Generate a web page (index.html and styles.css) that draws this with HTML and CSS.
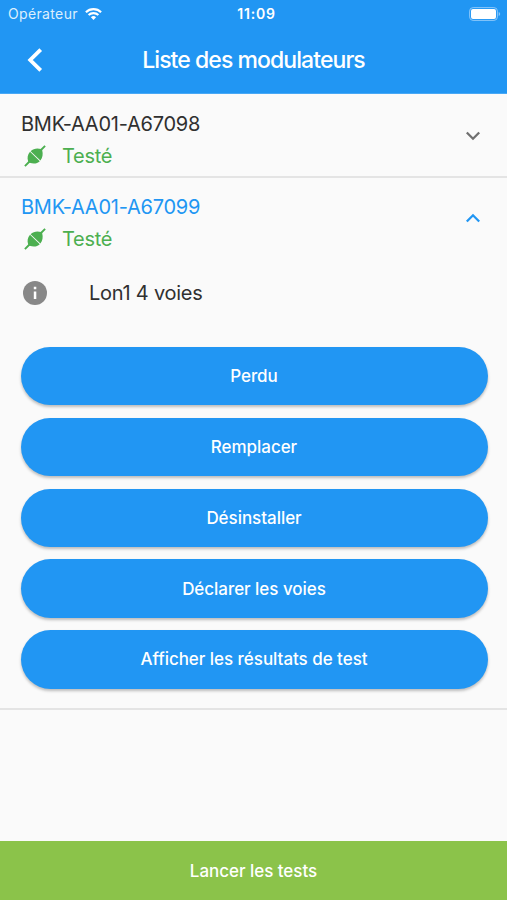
FILE: index.html
```html
<!DOCTYPE html>
<html lang="fr">
<head>
<meta charset="utf-8">
<title>Liste des modulateurs</title>
<link rel="stylesheet" href="styles.css">
</head>
<body>
<svg width="0" height="0" class="defs" aria-hidden="true">
  <symbol id="plug" viewBox="0 0 22 22">
    <path d="M.9 21.100 6 16M16 6 21.100.9" stroke="currentColor" stroke-width="1.900" fill="none"/>
    <path d="M6 6.800 15.800 16.200C13 18.900 9.500 19 5.600 17.800L4.200 16.400C3 13 3.500 9.800 6 6.800ZM6.600 6.200C9.500 3.400 13.500 2.900 17 4.100L18.200 5.300C19.200 9 18.700 12.800 16.400 15.600Z" fill="currentColor"/>
  </symbol>
</svg>
<div class="screen">
  <header class="header">
    <div class="status">
      <div class="carrier"><span>Opérateur</span>
        <svg class="wifi" viewBox="0 0 17 12"><path d="M.9 4.300a10.800 10.800 0 0 1 15.200 0M3.600 7.100a7 7 0 0 1 9.800 0" fill="none" stroke="#fff" stroke-width="2.100"/><path d="M5.900 9.300a3.800 3.800 0 0 1 5.200 0L8.500 12Z" fill="#fff"/></svg>
      </div>
      <span class="time">11:09</span>
      <svg class="battery" viewBox="0 0 32 14"><rect x=".6" y=".6" width="27.800" height="12.800" rx="3.500" fill="none" stroke="#8bc7fa" stroke-width="1"/><rect x="2" y="2" width="25" height="10" rx="2" fill="#fff"/><path d="M29.700 5v4q1.500-.6 1.500-2t-1.500-2Z" fill="#8bc7fa"/></svg>
    </div>
    <div class="bar">
      <svg class="back" viewBox="0 0 16 24"><path d="M13.700 1.600 3.200 12l10.500 10.400" fill="none" stroke="#fff" stroke-width="3.800"/></svg>
      <h1>Liste des modulateurs</h1>
    </div>
  </header>
  <main>
    <section class="item">
      <div class="item-head">
        <div><h2>BMK-AA01-A67098</h2><p class="state"><svg class="plug"><use href="#plug"/></svg><span>Testé</span></p></div>
        <svg class="chevron" viewBox="0 0 16 10"><path d="m1.800 1.500 6.200 6.200 6.200-6.200" fill="none" stroke="currentColor" stroke-width="2.300"/></svg>
      </div>
    </section>
    <section class="item open">
      <div class="item-head">
        <div><h2>BMK-AA01-A67099</h2><p class="state"><svg class="plug"><use href="#plug"/></svg><span>Testé</span></p></div>
        <svg class="chevron" viewBox="0 0 16 10"><path d="m1.800 8.500 6.200-6.200 6.200 6.200" fill="none" stroke="currentColor" stroke-width="2.300"/></svg>
      </div>
      <div class="info">
        <svg class="info-icon" viewBox="0 0 24 24"><circle cx="12" cy="12" r="12" fill="#888"/><path d="M10.800 5.800h2.500v2.500h-2.500zM10.800 10.600h2.500v7.500h-2.500z" fill="#fff"/></svg>
        <span>Lon1 4 voies</span>
      </div>
      <div class="actions">
        <button>Perdu</button>
        <button>Remplacer</button>
        <button>Désinstaller</button>
        <button>Déclarer les voies</button>
        <button>Afficher les résultats de test</button>
      </div>
    </section>
  </main>
  <button class="launch">Lancer les tests</button>
</div>
</body>
</html>
```
FILE: styles.css
```css
* { box-sizing: border-box; }
body { margin: 0; background: #fafafa; font-family: Inter, "Liberation Sans", sans-serif; color: #303030; }
h1, h2, p { margin: 0; font-weight: 400; }
button { border: 0; padding: 0; font: 500 17px/24px Inter, sans-serif; color: #fff; letter-spacing: -.04px; }
.defs { position: absolute; }
.screen { height: 900px; display: flex; flex-direction: column; overflow: hidden; }
.header { height: 94px; background: #2196f3; color: #fff; flex: none; border-bottom: 1px solid #48a8f5; }
.status { height: 27px; padding: 0 6px 0 8px; display: grid; grid-template-columns: 1fr auto 1fr; align-items: center; }
.carrier { display: flex; align-items: center; gap: 7px; font-size: 14px; letter-spacing: .35px; color: #dceffd; }
.wifi { width: 17px; height: 12px; }
.time { font-size: 14px; font-weight: 600; letter-spacing: .8px; padding-left: 4px; }
.battery { width: 32px; height: 14px; justify-self: end; }
.bar { height: 66px; display: grid; grid-template-columns: 70px 1fr 70px; align-items: center; }
.back { width: 16px; height: 24px; margin-left: 27px; }
h1 { font-size: 23px; font-weight: 500; letter-spacing: -.93px; text-align: center; white-space: nowrap; }
main { flex: 1; }
.item { border-bottom: 2px solid #e4e4e4; }
.item-head { height: 83px; padding: 15px 26px 0 21px; display: flex; justify-content: space-between; }
.item:first-child .item-head { height: 82px; }
.open .item-head { padding-top: 14px; }
.item-head h2 { font-size: 20px; line-height: 30px; letter-spacing: -.24px; }
.state { display: flex; align-items: center; height: 33px; color: #4caf50; font-size: 20px; letter-spacing: -.3px; }
.plug { width: 22px; height: 22px; margin: 0 16px 0 3px; }
.chevron { width: 16px; height: 10px; margin-top: 22px; color: #707070; }
.open h2, .open .chevron { color: #2196f3; }
.open .chevron { margin-top: 21px; }
.info { height: 63px; padding: 0 23px; display: flex; align-items: center; gap: 42px; font-size: 20px; letter-spacing: -.25px; }
.info-icon { width: 24px; height: 24px; }
.actions { padding: 23px 19.5px 19px 20.5px; display: flex; flex-direction: column; gap: 12.4px; }
.actions button { height: 58.4px; border-radius: 30px; background: #2196f3; box-shadow: 0 2px 3px rgba(0,0,0,.25); }
.launch { height: 59px; background: #8bc34a; flex: none; }
```
